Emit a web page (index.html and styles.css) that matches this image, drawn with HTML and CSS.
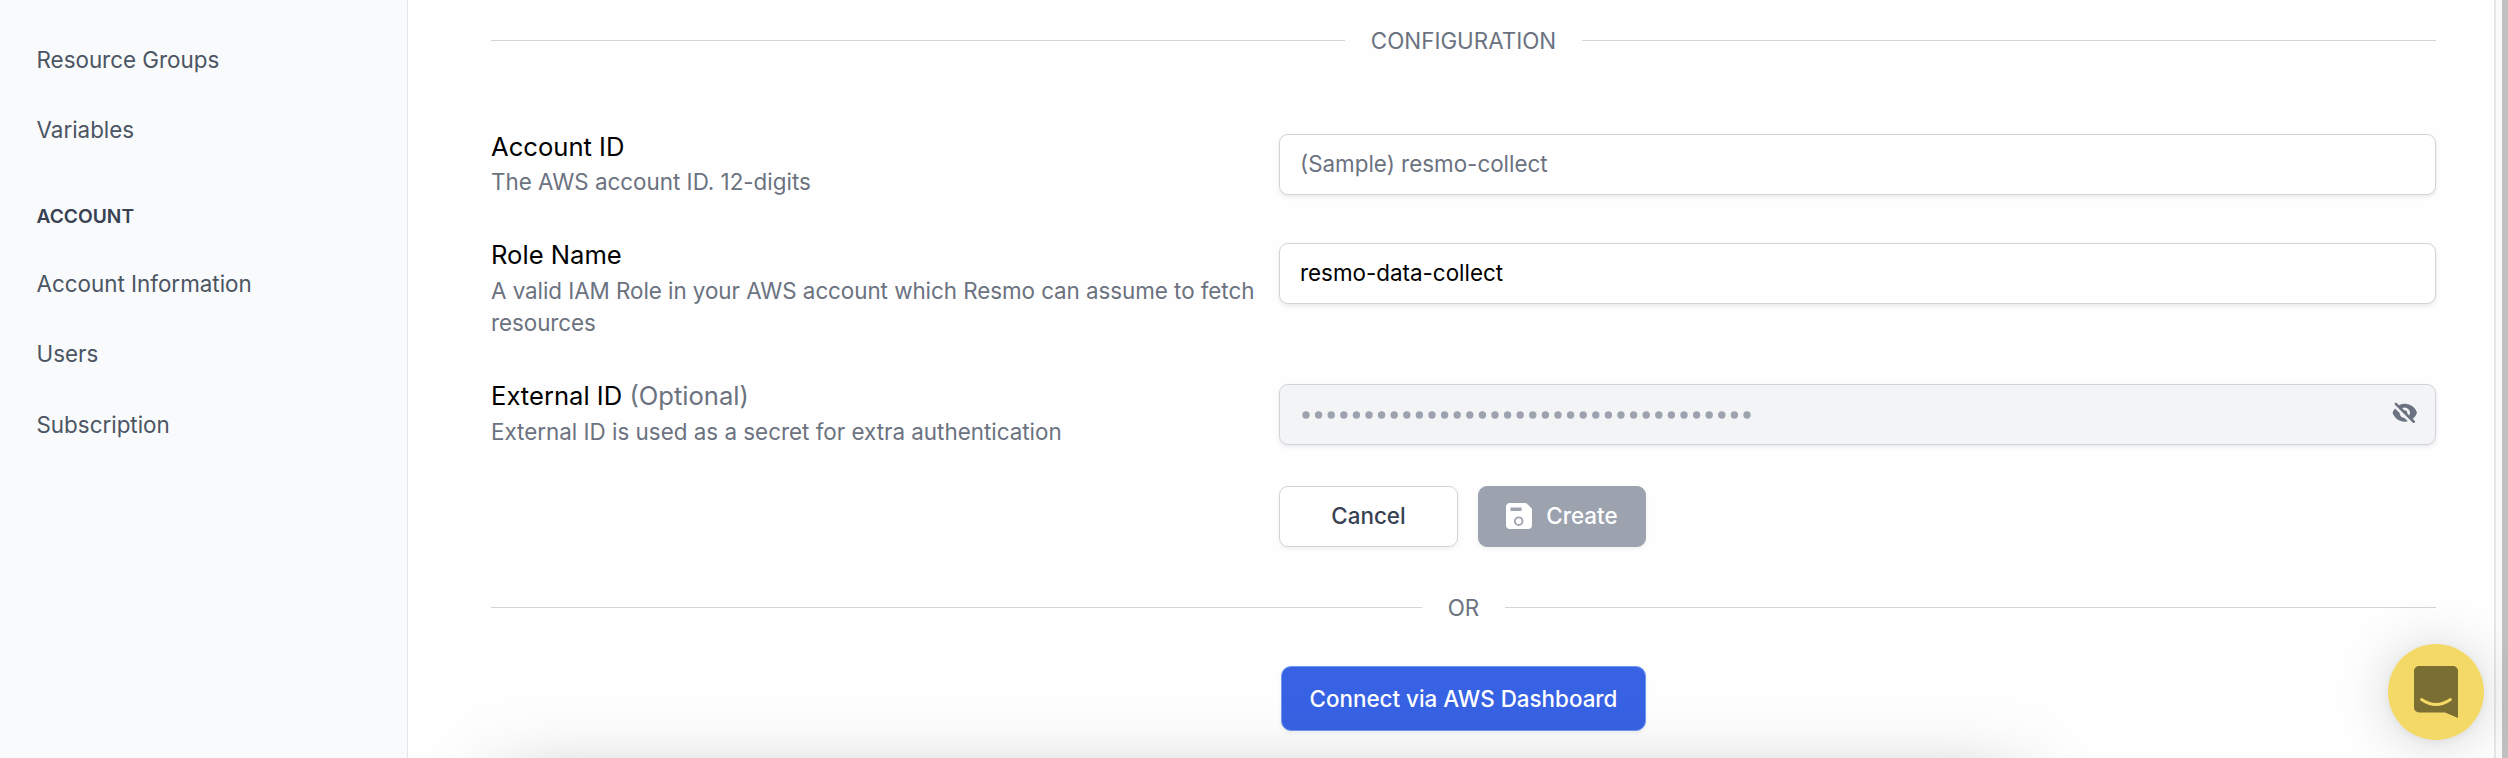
FILE: index.html
```html
<!DOCTYPE html>
<html lang="en">
<head>
<meta charset="utf-8">
<title>Resmo</title>
<link rel="stylesheet" href="styles.css">
</head>
<body>
<div class="app">
  <nav class="sidebar">
    <a class="nav-link">Resource Groups</a>
    <a class="nav-link">Variables</a>
    <h2 class="nav-heading">ACCOUNT</h2>
    <a class="nav-link">Account Information</a>
    <a class="nav-link">Users</a>
    <a class="nav-link">Subscription</a>
  </nav>
  <main class="content">
    <div class="divider"><span class="divider-text">CONFIGURATION</span></div>
    <form class="form">
      <div class="row row-account">
        <div class="info"><div class="label">Account ID</div><div class="help">The AWS account ID. 12-digits</div></div>
        <div class="field placeholder">(Sample) resmo-collect</div>
      </div>
      <div class="row row-role">
        <div class="info"><div class="label">Role Name</div><div class="help help-long">A valid IAM Role in your AWS account which Resmo can assume to fetch resources</div></div>
        <div class="field">resmo-data-collect</div>
      </div>
      <div class="row row-external">
        <div class="info"><div class="label">External ID <span class="optional">(Optional)</span></div><div class="help">External ID is used as a secret for extra authentication</div></div>
        <div class="field disabled">
          <svg class="dots" width="460" height="8" viewBox="0 0 460 8"><path d="M4 4H456" stroke="#9ca3af" stroke-width="7.4" stroke-linecap="round" stroke-dasharray="0 12.6"/></svg>
          <svg class="eye" viewBox="0 0 20 20" fill="#6b7280"><path fill-rule="evenodd" d="M3.707 2.293a1 1 0 00-1.414 1.414l14 14a1 1 0 001.414-1.414l-1.473-1.473A10.014 10.014 0 0019.542 10C18.268 5.943 14.478 3 10 3a9.958 9.958 0 00-4.512 1.074l-1.78-1.781zm4.261 4.26l1.514 1.515a2.003 2.003 0 012.45 2.45l1.514 1.514a4 4 0 00-5.478-5.478z"/><path d="M12.454 16.697L9.75 13.992a4 4 0 01-3.742-3.741L2.335 6.578A9.98 9.98 0 00.458 10c1.274 4.057 5.065 7 9.542 7 .847 0 1.669-.105 2.454-.303z"/></svg>
        </div>
      </div>
      <div class="actions">
        <button type="button" class="btn cancel">Cancel</button>
        <button type="button" class="btn create"><svg class="save" viewBox="0 0 26 26"><path fill="#fff" fill-rule="evenodd" d="M4 0h15q1 0 1.700.600l4.600 4.500q.700.700.700 1.700V22a4 4 0 0 1-4 4H4a4 4 0 0 1-4-4V4a4 4 0 0 1 4-4zM4.500 4.500v3.500h11V4.500z"/><circle cx="12.700" cy="18.200" r="3.800" fill="#fff" stroke="#9ca3af" stroke-width="1.900"/></svg>Create</button>
      </div>
    </form>
    <div class="divider divider-or"><span class="divider-text">OR</span></div>
    <button type="button" class="btn connect">Connect via AWS Dashboard</button>
  </main>
  <div class="gutter"></div>
</div>
<div class="bottom-shade"></div>
<div class="chat"><svg class="chat-icon" viewBox="0 0 44 52"><path fill="#7b6e33" d="M5 0h34a5 5 0 0 1 5 5v47l-13-5.500H5a5 5 0 0 1-5-5V5a5 5 0 0 1 5-5z"/><path d="M7.500 33.500Q22 43.500 36.500 33.500" fill="none" stroke="#f4d966" stroke-width="2.800" stroke-linecap="round"/></svg></div>
</body>
</html>
```
FILE: styles.css
```css
* { box-sizing: border-box; }
body { margin: 0; width: 2508px; height: 758px; overflow: hidden; position: relative; background: #fefefe; font-family: Inter, "Liberation Sans", sans-serif; font-size: 22.4px; line-height: 32px; color: #000; }
.app { display: flex; height: 758px; }
.sidebar { width: 408px; padding: 25px 0 0 36.5px; background: #f9fafc; border-right: 1px solid #e5e7eb; display: flex; flex-direction: column; }
.nav-link { height: 70px; line-height: 70px; color: #4b5563; }
.nav-link:last-child { padding-top: 1px; }
.nav-heading { margin: 0; height: 84px; padding-top: 34.5px; font-size: 19.2px; line-height: 32px; font-weight: 600; color: #374151; }
.content { flex: 1; padding: 24px 58px 0 83px; display: flex; flex-direction: column; }
.divider { display: flex; align-items: center; gap: 26px; height: 33px; color: #6b7280; }
.divider::before, .divider::after { content: ""; flex: 1; height: 1px; background: #d1d5db; }
.form { display: flex; flex-direction: column; margin-top: 77px; }
.row { display: grid; grid-template-columns: 788px 1157px; align-items: start; }
.row-account { height: 109px; }
.row-role { height: 141px; }
.row-external { height: 102px; }
.info { margin-top: -5px; padding-right: 14px; }
.row-account .info { margin-top: -4px; }
.row-account .help { margin-top: 2px; }
.label { font-size: 25.6px; line-height: 34px; }
.optional, .help { color: #6b7280; }
.help { line-height: 32px; margin-top: 3px; }
.help-long { letter-spacing: -.05px; }
.field { height: 61px; display: flex; align-items: center; padding: 0 20px 1px; background: #fff; border: 1px solid #d1d5db; border-radius: 9px; box-shadow: 0 2px 4px rgba(0,0,0,.09); }
.placeholder { color: #6b7280; }
.disabled { background: #f3f4f6; justify-content: space-between; padding: 0 17.5px 0 22px; }
.eye { width: 25.6px; height: 25.6px; margin-bottom: 4px; }
.actions { display: flex; gap: 20px; padding-left: 788px; }
.btn { font: 500 22.4px/32px Inter, "Liberation Sans", sans-serif; height: 61px; padding: 0 0 1px; border-radius: 9px; display: flex; align-items: center; justify-content: center; border: 1px solid #d1d5db; box-shadow: 0 2px 4px rgba(0,0,0,.06); }
.cancel { width: 179px; background: #fff; color: #374151; }
.create { width: 168px; background: #9ca3af; border-color: #9ca3af; color: #fff; gap: 14px; }
.save { width: 26px; height: 26px; }
.divider-or { margin-top: 44px; }
.connect { width: 365px; height: 65px; margin: 42px 0 0 790px; padding: 1px 0 0; background: #3762e3; border-color: #6f98f0; color: #fff; border-radius: 10px; }
.gutter { width: 14px; background: #fafafa; border-left: 2px solid #e6e6e6; border-right: 6px solid #c1c1c1; }
.bottom-shade {
  position: absolute; left: 420px; bottom: 0; width: 1680px; height: 60px; pointer-events: none;
  background: linear-gradient(rgba(0,0,0,0), rgba(0,0,0,.006) 28%, rgba(0,0,0,.016) 50%, rgba(0,0,0,.035) 73%, rgba(0,0,0,.072));
  mask-image: linear-gradient(90deg, transparent, rgba(0,0,0,.1) 35px, rgba(0,0,0,.5) 82px, rgba(0,0,0,.9) 130px, #000 180px, #000 1500px, rgba(0,0,0,.9) 1550px, rgba(0,0,0,.5) 1598px, rgba(0,0,0,.1) 1645px, transparent);
}
.chat { position: absolute; left: 2388px; top: 644px; width: 96px; height: 96px; border-radius: 50%; background: #f4d966; display: flex; align-items: center; justify-content: center; box-shadow: 0 2px 10px rgba(0,0,0,.06), 0 3px 54px rgba(0,0,0,.16); }
.chat-icon { width: 44px; height: 52px; }
```
